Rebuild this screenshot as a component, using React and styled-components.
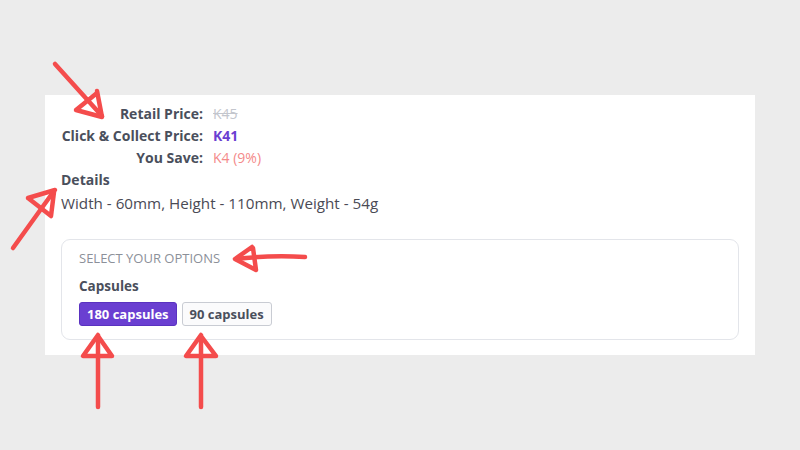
import React from "react";
import styled, { createGlobalStyle } from "styled-components";

const Global = createGlobalStyle`
  html, body { margin: 0; padding: 0; background: #ececec; }
  body { font-family: "Open Sans", "Noto Sans", sans-serif; }
`;

const Stage = styled.div`
  position: relative;
  width: 800px;
  height: 450px;
  display: flex;
  align-items: center;
  justify-content: center;
  overflow: hidden;
`;

const Panel = styled.div`
  width: 710px;
  height: 260px;
  box-sizing: border-box;
  background: #ffffff;
  padding: 8px 16px 15px 16px;
  display: flex;
  flex-direction: column;
  color: #4a4f5c;
  font-size: 14px;
`;

const PriceGrid = styled.div`
  display: grid;
  grid-template-columns: 142px auto;
  column-gap: 10px;
  line-height: 22px;
`;

const Label = styled.div`
  text-align: right;
  font-weight: 700;
  color: #4a4f5c;
`;

const Value = styled.div`
  color: ${(p) => p.$color};
  font-weight: ${(p) => (p.$bold ? 700 : 400)};
  text-decoration: ${(p) => (p.$strike ? "line-through" : "none")};
`;

const DetailsTitle = styled.div`
  font-weight: 700;
  line-height: 22px;
`;

const DetailsText = styled.div`
  font-size: 15.2px;
  line-height: 24px;
  color: #4a4a55;
`;

const OptionsBox = styled.div`
  margin-top: 24px;
  border: 1px solid #e3e5ea;
  border-radius: 9px;
  padding: 9px 17px 13px;
  display: flex;
  flex-direction: column;
`;

const OptionsHeading = styled.div`
  font-size: 13px;
  line-height: 18px;
  color: #8c9099;
  text-transform: uppercase;
`;

const OptionLabel = styled.div`
  margin-top: 10px;
  font-size: 13.5px;
  font-weight: 700;
  line-height: 18px;
  color: #4a4f5c;
`;

const ButtonRow = styled.div`
  margin-top: 7px;
  display: flex;
  gap: 5px;
`;

const Choice = styled.button`
  height: 24px;
  box-sizing: border-box;
  padding: 0 7px;
  border-radius: 3px;
  font-family: inherit;
  font-size: 13px;
  font-weight: 700;
  cursor: pointer;
  border: 1px solid ${(p) => (p.$active ? "#5a32c0" : "#c9ccd3")};
  background: ${(p) => (p.$active ? "#6a3fd1" : "#fbfbfc")};
  color: ${(p) => (p.$active ? "#ffffff" : "#4a4f5c")};
`;

const Annotations = styled.svg`
  position: absolute;
  left: 0;
  top: 0;
  width: 800px;
  height: 450px;
  pointer-events: none;
`;

const red = "#f44c4c";

export default function App() {
  return (
    <>
      <Global />
      <Stage>
        <Panel>
          <PriceGrid>
            <Label>Retail Price:</Label>
            <Value $color="#c3c6cd" $strike>K45</Value>
            <Label>Click &amp; Collect Price:</Label>
            <Value $color="#6a3fd1" $bold>K41</Value>
            <Label>You Save:</Label>
            <Value $color="#f48a8a">K4 (9%)</Value>
          </PriceGrid>
          <DetailsTitle>Details</DetailsTitle>
          <DetailsText>Width - 60mm, Height - 110mm, Weight - 54g</DetailsText>
          <OptionsBox>
            <OptionsHeading>Select your options</OptionsHeading>
            <OptionLabel>Capsules</OptionLabel>
            <ButtonRow>
              <Choice $active>180 capsules</Choice>
              <Choice>90 capsules</Choice>
            </ButtonRow>
          </OptionsBox>
        </Panel>
        <Annotations viewBox="0 0 800 450">
          <g fill="none" stroke={red} strokeWidth="4.5" strokeLinecap="round" strokeLinejoin="round">
            <path d="M55 64 L102 116" />
            <path d="M97 91 L102 117 L76 110 L97 93" />
            <path d="M13 248 L54 191" />
            <path d="M55 190 L28 198 L51 216 L54 192" />
            <path d="M305 257 Q270 255 236 259" />
            <path d="M252 247 L235 259 L256 270 L253 248" />
            <path d="M98 407 L98 336" />
            <path d="M98 335 L83 356 L112 356 L98 336" />
            <path d="M201 407 L201 336" />
            <path d="M201 335 L186 356 L216 356 L201 336" />
          </g>
        </Annotations>
      </Stage>
    </>
  );
}
